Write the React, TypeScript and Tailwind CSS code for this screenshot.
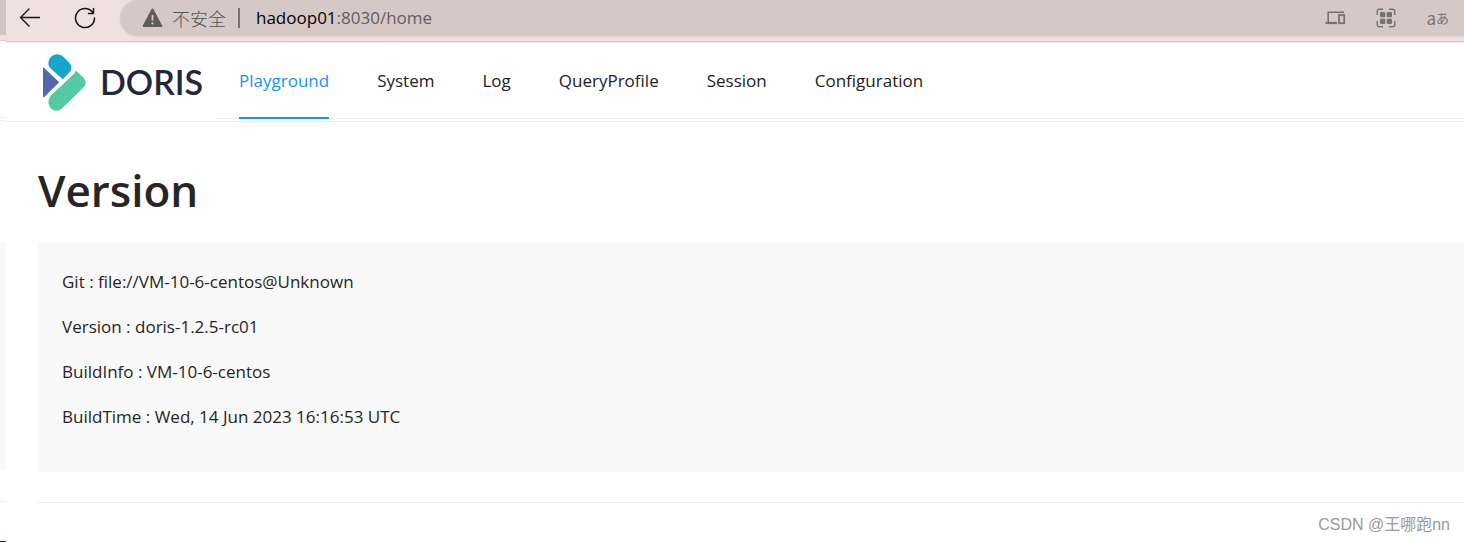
import React from "react";

const navItems = ["Playground", "System", "Log", "QueryProfile", "Session", "Configuration"];

const versionInfo = [
  ["Git", "file://VM-10-6-centos@Unknown"],
  ["Version", "doris-1.2.5-rc01"],
  ["BuildInfo", "VM-10-6-centos"],
  ["BuildTime", "Wed, 14 Jun 2023 16:16:53 UTC"],
];

function BackgroundWindowEdge() {
  return (
    <div aria-hidden="true" className="flex w-1.5 shrink-0 flex-col bg-white">
      <div className="h-[35px] bg-[#d2c5c4]" />
      <div className="h-[5px] bg-[#eedfde]" />
      <div className="h-px bg-[#dacccb]" />
      <div className="h-[76px]" />
      <div className="h-px bg-[#eeeeee]" />
      <div className="h-[2px]" />
      <div className="h-px bg-[#eeeeee]" />
      <div className="h-[120px]" />
      <div className="h-[230px] bg-[#f9f9f9]" />
      <div className="h-[30px]" />
      <div className="h-px bg-[#eeeeee]" />
      <div className="grow" />
      <div className="h-px bg-[#222244]" />
    </div>
  );
}

function BrowserBar() {
  return (
    <div className="flex h-[43px] flex-col justify-between bg-[#f0e1e0]">
      <div className="flex h-9 items-center">
        <button aria-label="Back" className="ml-3 flex size-6 items-center justify-center">
          <svg width="22" height="20" viewBox="0 0 22 20" fill="none" stroke="#161313" strokeWidth="1.4" strokeLinecap="round" strokeLinejoin="round">
            <path d="M20.5 9.5H1.5M10 1 1.5 9.5 10 18" />
          </svg>
        </button>
        <button aria-label="Refresh" className="ml-[31px] flex size-6 items-center justify-center">
          <svg width="22" height="22" viewBox="0 0 22 22" fill="none" stroke="#161313" strokeWidth="1.5" strokeLinecap="round" strokeLinejoin="round">
            <path d="M19.2 6.2A9.5 9.5 0 1 0 20.5 11M19.5 1.5v5h-5" />
          </svg>
        </button>
        <div className="ml-[23px] flex h-9 grow items-center rounded-l-full bg-[#d6c8c7] pr-[15px] pl-[22px] shadow-[0_1px_3px_#dccecd]">
          <svg width="21" height="20" viewBox="0 0 21 20" aria-hidden="true">
            <path d="M10.5 1.5 19.3 18H1.7Z" fill="#5f5c5b" stroke="#5f5c5b" strokeWidth="2" strokeLinejoin="round" />
            <path d="M10.5 7v5.5" stroke="#d6c8c7" strokeWidth="1.8" />
            <circle cx="10.5" cy="15.3" r="1.1" fill="#d6c8c7" />
          </svg>
          <span className="ml-[9px] font-['Noto_Sans_CJK_SC',sans-serif] text-[18px] leading-6 font-light text-[#555150]">不安全</span>
          <span className="ml-3 h-5 w-[2px] bg-[#777170]" />
          <span className="ml-4 text-[17px] leading-6 text-[#625d5c]">
            <span className="text-black">hadoop01</span>:8030/home
          </span>
          <div className="ml-auto flex items-center gap-[30px] text-[#777271]">
            <button aria-label="Devices" className="flex">
              <svg width="21" height="14" viewBox="0 0 21 14" fill="none" stroke="currentColor" strokeWidth="1.6">
                <path d="M19 1.2H3.2v11" />
                <path d="M0.5 12H12" strokeWidth="2.2" />
                <rect x="14" y="4" width="5.2" height="8.2" strokeWidth="1.8" />
              </svg>
            </button>
            <button aria-label="Apps" className="flex">
              <svg width="20" height="20" viewBox="0 0 20 20" fill="none" stroke="currentColor" strokeWidth="1.4">
                <path d="M1.2 7V3.5a2.3 2.3 0 0 1 2.3-2.3H7M13 1.2h3.5a2.3 2.3 0 0 1 2.3 2.3V7M18.8 13v3.5a2.3 2.3 0 0 1-2.3 2.3H13M7 18.8H3.5a2.3 2.3 0 0 1-2.3-2.3V13" />
                <g fill="currentColor" stroke="none">
                  <rect x="4" y="4" width="5.3" height="5.3" rx="1" />
                  <rect x="10.7" y="4" width="5.3" height="5.3" rx="1" />
                  <rect x="4" y="10.7" width="5.3" height="5.3" rx="1" />
                  <rect x="10.7" y="10.7" width="5.3" height="5.3" rx="1" />
                </g>
              </svg>
            </button>
            <button aria-label="Translate" className="flex items-center leading-5">
              <span className="font-['Noto_Sans_CJK_JP',sans-serif] text-[17px]">a</span>
              <span className="font-['Noto_Sans_CJK_JP',sans-serif] text-[13px]">あ</span>
            </button>
          </div>
        </div>
      </div>
      <div className="h-[2px] border-t border-[#d9cccb] bg-[#f0eaea]" />
    </div>
  );
}

function Logo() {
  return (
    <a href="/home" aria-label="Doris" className="flex h-full w-[209px] shrink-0 items-center pl-9">
      <svg width="44" height="57" viewBox="0 0 44 57" aria-hidden="true">
        <path d="M1.2 13.2Q1.4 13.1 2 13.7L17.2 28.3 2 43.2Q1 43.6 1 42.5V13.8Z" fill="#5268ad" />
        <path d="M6.4 9.2C6.4 1.5 15-2.4 21 2.6L27.5 9c2.6 3 2.6 6.5 0 9.3L20.8 25.2 9 14.8C7.3 13.2 6.4 11.6 6.4 9.2Z" fill="#15a7cb" />
        <path d="M33.7 16.2 41 23.3c3.5 3.6 3.5 7.1 0 10.8L20.5 54C14.7 59.3 6.5 55.8 6.5 48c0-3 1-5 3-7L31.5 20.2C33 18.8 33.7 17.5 33.7 16.2Z" fill="#54caa4" />
      </svg>
      <span className="ml-[14px] font-['Lato',sans-serif] text-[34px] leading-10 font-semibold text-[#1f2939]">DORIS</span>
    </a>
  );
}

function Header() {
  return (
    <header className="flex h-[79px] items-start border-b border-[#eeeeee]">
      <Logo />
      <nav className="flex h-[76px] grow gap-12 border-b border-[#eeeeee] pl-6">
        {navItems.map((item, i) => (
          <a
            key={item}
            href={"#" + item}
            className={
              i === 0
                ? "-mb-px flex items-center border-b-2 border-[#1890ff] pt-0.5 text-[17px] text-[#1890ff]"
                : "-mb-px flex items-center border-b-2 border-transparent pt-0.5 text-[17px] text-[#222222]"
            }
          >
            {item}
          </a>
        ))}
      </nav>
    </header>
  );
}

export default function App() {
  return (
    <div className="flex min-h-screen bg-white font-['Open_Sans','Noto_Sans_CJK_SC',sans-serif]">
      <BackgroundWindowEdge />
      <div className="flex min-w-0 grow flex-col">
        <BrowserBar />
        <Header />
        <main className="pl-8">
          <h1 className="pt-[38px] text-[44px] leading-[60px] font-semibold text-[#262626]">Version</h1>
          <section className="mt-[22px] flex flex-col gap-5 bg-[#f9f9f9] px-6 pt-[27px] pb-[43px] text-[17px] leading-[25px] text-[#262626]">
            {versionInfo.map(([label, value]) => (
              <p key={label}>
                {label} : {value}
              </p>
            ))}
          </section>
          <hr className="mt-[30px] border-[#eeeeee]" />
        </main>
        <footer className="mt-auto pr-[14px] pb-[3px] text-right font-['Liberation_Sans','Noto_Sans_CJK_SC',sans-serif] text-[16px] leading-7 text-[#999999]">
          CSDN @王哪跑nn
        </footer>
      </div>
    </div>
  );
}
